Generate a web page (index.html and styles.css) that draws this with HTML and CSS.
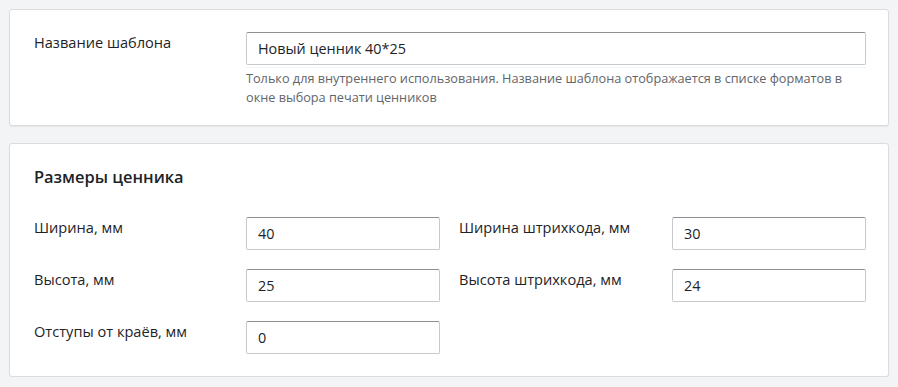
FILE: index.html
```
<!DOCTYPE html>
<html lang="ru">
<head>
<meta charset="utf-8">
<link rel="stylesheet" href="styles.css">
</head>
<body>
<section class="card card-name">
  <div class="field-row">
    <label class="label">Название шаблона</label>
    <div class="control">
      <div class="input input-wide">Новый ценник 40*25</div>
      <p class="hint">Только для внутреннего использования. Название шаблона отображается в списке форматов в окне выбора печати ценников</p>
    </div>
  </div>
</section>
<section class="card card-sizes">
  <h2 class="title">Размеры ценника</h2>
  <div class="grid">
    <label class="label">Ширина, мм</label>
    <div class="input">40</div>
    <label class="label label-second">Ширина штрихкода, мм</label>
    <div class="input">30</div>
    <label class="label">Высота, мм</label>
    <div class="input">25</div>
    <label class="label label-second">Высота штрихкода, мм</label>
    <div class="input">24</div>
    <label class="label">Отступы от краёв, мм</label>
    <div class="input">0</div>
  </div>
</section>
</body>
</html>
```
FILE: styles.css
```
html, body {
  margin: 0;
  padding: 0;
}
body {
  background: #f3f4f5;
  padding: 9px 9px 0 9px;
  font-family: "Open Sans", "Noto Sans", sans-serif;
  color: #1d2327;
  font-size: 14px;
}
.card {
  box-sizing: border-box;
  width: 880px;
  background: #fff;
  border: 1px solid #dcdcde;
  border-radius: 3px;
  box-shadow: 0 1px 1px rgba(0,0,0,.06);
  padding: 22px 22px 0 24px;
}
.card-name {
  height: 117px;
}
.card-sizes {
  margin-top: 17px;
  height: 234px;
}
.field-row {
  display: grid;
  grid-template-columns: 212px 1fr;
}
.label {
  font-size: 14.6px;
  line-height: 20px;
}
.input {
  box-sizing: border-box;
  height: 33px;
  border: 1px solid #c8c9cc;
  border-top-color: #8c8f94;
  border-radius: 2px;
  padding: 0 11px;
  line-height: 32px;
  font-size: 14.4px;
  color: #1d2327;
  background: #fff;
}
.input-wide {
  width: 620px;
}
.hint {
  margin: 2px 0 0 0;
  font-size: 12.7px;
  line-height: 19px;
  color: #5f656b;
  border-top: 1px solid #eef3f8;
  padding-top: 1px;
  width: 620px;
}
.title {
  margin: 0;
  font-size: 16.4px;
  font-weight: 600;
  line-height: 22px;
}
.grid {
  margin-top: 29px;
  display: grid;
  grid-template-columns: 212px 194px 232px 194px;
  row-gap: 19px;
}
.label-second {
  padding-left: 19px;
}
```
